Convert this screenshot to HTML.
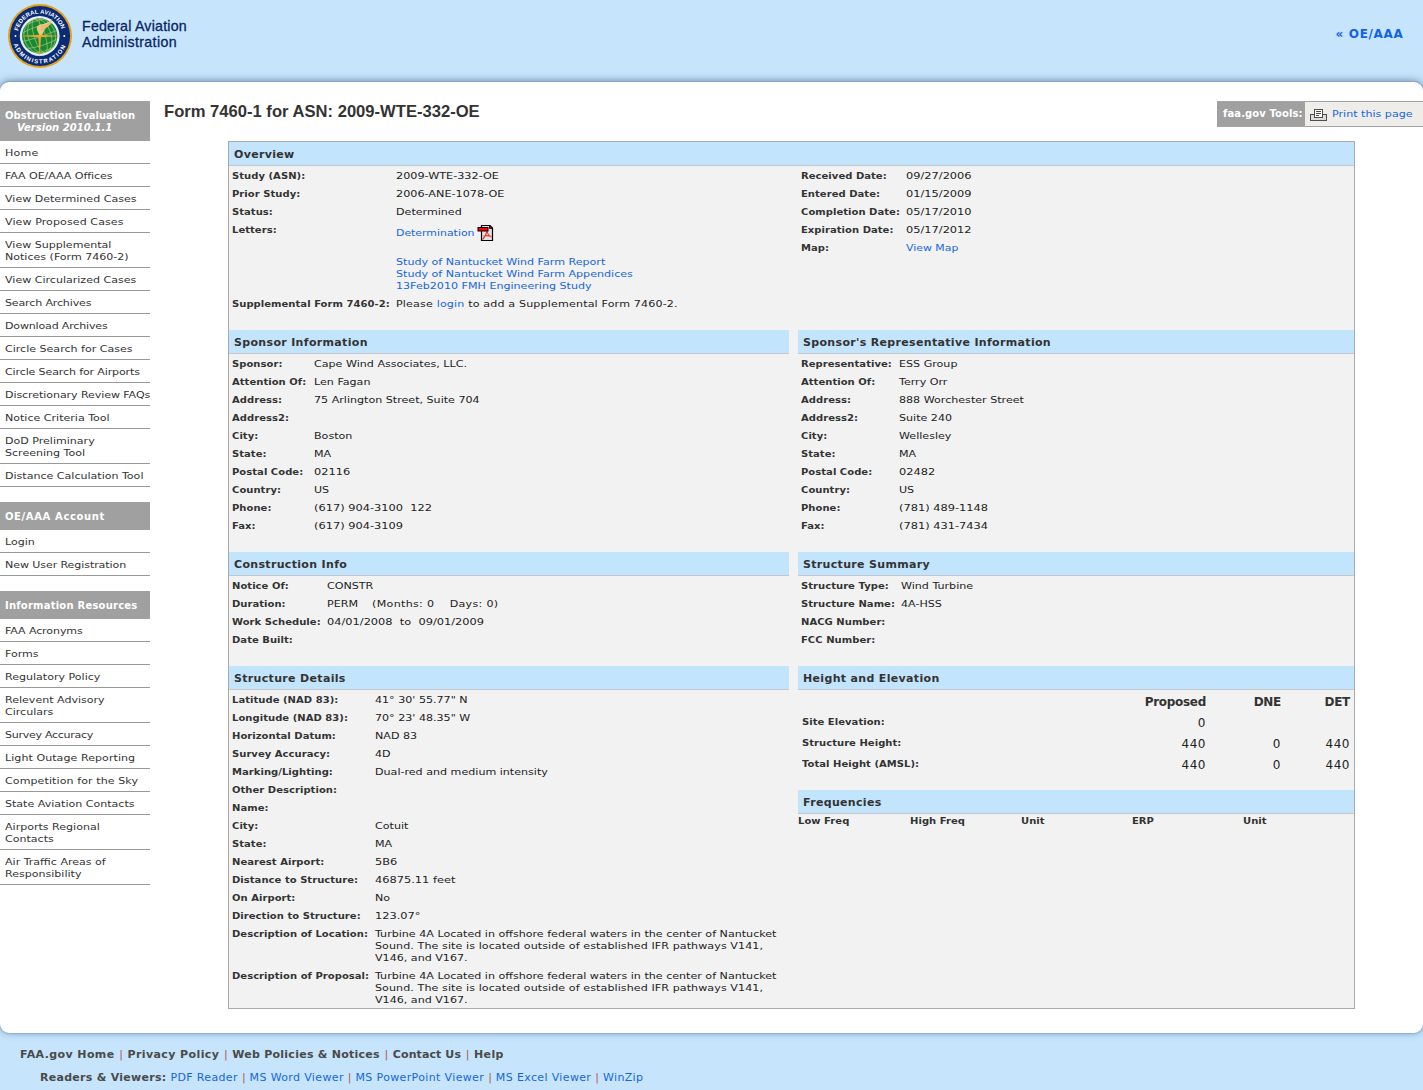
<!DOCTYPE html>
<html lang="en">
<head>
<meta charset="utf-8">
<title>Form 7460-1 for ASN: 2009-WTE-332-OE</title>
<style>
*{box-sizing:border-box;margin:0;padding:0}
html,body{width:1423px;height:1090px;overflow:hidden}
body{background:#c6e5fc;font-family:"DejaVu Sans","Liberation Sans",sans-serif;font-size:10px;line-height:12px;color:#222;letter-spacing:.55px;position:relative}
a{color:#1766e0;text-decoration:none}
b,.b{font-weight:bold;letter-spacing:.04px}
.abs{position:absolute}
/* header */
#hdr{position:absolute;left:0;top:0;width:1423px;height:82px;background:#c6e5fc}
#logo{position:absolute;left:7px;top:3px;width:66px;height:66px}
#faa1,#faa2{position:absolute;left:82px;font-family:"Liberation Sans",sans-serif;font-size:14.2px;letter-spacing:.21px;color:#0a2466;-webkit-text-stroke:.3px #0a2466;line-height:16px;white-space:nowrap}
#faa1{top:18.300px}#faa2{top:34px;letter-spacing:.36px}
#oeaaa{position:absolute;right:19.500px;top:26px;font-weight:bold;font-size:12px;line-height:16px;letter-spacing:.68px;color:#0f62ea}
#white{position:absolute;left:0;top:82px;width:1423px;height:951px;background:#fff;border-radius:9px;box-shadow:0 0 2px rgba(45,75,115,.45),0 -1px 8px rgba(45,75,115,.6)}
/* sidebar */
#side{position:absolute;left:0;top:101px;width:150px}
#side h3{background:#a0a0a0;color:#fff;font-size:10px;line-height:12px;font-weight:bold;letter-spacing:.02px;padding:9px 5px 7px;height:28px;margin-top:15px}
#side h3.first{height:40px;margin-top:0}
#side h3 i{padding-left:12px}
#side a{display:block;color:#333;padding:6px 0 4px 5px;border-bottom:1px solid #999;line-height:12px;white-space:nowrap}
.sx{display:inline-block;transform:scale(1.105,.93);transform-origin:0 80%;letter-spacing:0}
/* title + tools */
#title{position:absolute;left:164px;top:102px;font-family:"Liberation Sans",sans-serif;font-weight:bold;font-size:16.6px;line-height:20px;letter-spacing:0;color:#333;white-space:nowrap}
#tools{position:absolute;left:1217px;top:101px;width:206px;height:26px;background:#eeede9;border-top:1px solid #a4a4a4;border-bottom:1px solid #a4a4a4}
#tools .lab{position:absolute;left:0;top:0;width:88px;height:24px;background:#a0a0a0;color:#fff;font-weight:bold;letter-spacing:.1px;padding:6px 0 0 6px;white-space:nowrap}
#tools a{position:absolute;left:115px;top:6px;white-space:nowrap;letter-spacing:0;transform:scale(1.11,.93);transform-origin:0 80%}
#tools svg{position:absolute;left:93px;top:7px}
/* panel */
#panel{position:absolute;left:228px;top:141px;width:1127px;height:868px;background:#f2f2f2;border:1px solid #aaa}
.hd{position:absolute;height:24px;background:#c2e4fc;border-bottom:1px solid #c4c8cc;font-weight:bold;font-size:11px;line-height:14px;letter-spacing:.33px;color:#333;padding:6px 0 0 5px;white-space:nowrap}
.r{position:absolute;white-space:nowrap;line-height:12px}
.r b{color:#333}
.r.v{transform:scale(1.11,.93);transform-origin:0 80%;letter-spacing:0}
.r.v.n{transform:scale(1.138,.93)}
.r.l{transform:scale(1,.95);transform-origin:0 80%}
.he{position:absolute;font-size:12px;line-height:14px;letter-spacing:.5px;white-space:nowrap;color:#222}
.he.hb{font-weight:bold;letter-spacing:-.3px;color:#333}
/* footer */
#f1,#f2{position:absolute;font-size:11px;line-height:14px;white-space:nowrap;letter-spacing:.4px}
#f1{left:20px;top:1048px;color:#4a4a4a;font-weight:bold}
#f1 .sep,#f2 .sep{text-decoration:none;font-weight:normal;color:#b5544f;padding:0 4.6px;letter-spacing:0}
#f2 .sep{padding:0 4px}
#f2{left:40px;top:1071px}
#f2 b{color:#4a4a4a;letter-spacing:.28px}
#f2 a{letter-spacing:.36px}
</style>
</head>
<body>
<div id="hdr"></div>
<div id="white"></div>
<!--LOGOS--><svg id="logo" viewBox="0 0 66 66" width="66" height="66">
<defs>
<path id="arcT" d="M 10.61 32.22 A 22.4 22.4 0 0 1 55.39 32.22"/>
<path id="arcB" d="M 5.42 33.96 A 27.6 27.6 0 0 0 60.58 33.96"/>
<clipPath id="gclip"><circle cx="32.7" cy="33" r="17.6"/></clipPath>
</defs>
<circle cx="33" cy="33" r="32" fill="#e3a11a"/>
<circle cx="33" cy="33" r="30.1" fill="#0b2b76"/>
<circle cx="32.7" cy="33" r="19.9" fill="#e4f0fb"/>
<circle cx="32.7" cy="33" r="17.7" fill="#148a38"/>
<g clip-path="url(#gclip)" fill="none" stroke="#c9cf6e" stroke-width=".55" transform="rotate(-18 32.7 33)">
<ellipse cx="32.7" cy="33" rx="5.5" ry="17.7"/>
<ellipse cx="32.7" cy="33" rx="11.5" ry="17.7"/>
<ellipse cx="32.7" cy="33" rx="15.6" ry="17.7"/>
<path d="M14 25.500Q32.7 21 52 25.500M14 40.500Q32.7 45 52 40.500M17 46.500Q32.7 51 48 46.500M17 19.500Q32.7 15.500 48 19.500M15 33Q32.7 35 51 33"/>
</g>
<polygon points="32.7,11 33.200,33 32.200,33" fill="#f0b552"/>
<path d="M32.800 32.500C30.500 29 29.400 26 29.900 23.600C31.500 21.800 34 21.300 36.500 21C39.500 20 43 18.500 45.400 16.300C44.500 20 42 23.500 38.500 25.600C37 28 35.800 30.500 35 32.500Z" fill="#edc684"/>
<path d="M33.500 24C37 23.500 41 21.800 43.800 19.300M34 26.500C37 25.800 39.500 24.500 41.500 22.800" stroke="#d99a3a" stroke-width=".5" fill="none"/>
<polygon points="11.500,33 32.700,31.800 54,33 32.700,34.200" fill="#f0a52e"/>
<polygon points="31.300,33 34.100,33 32.700,55" fill="#f0a52e"/>
<circle cx="8.500" cy="33" r=".95" fill="#fff"/><circle cx="57.300" cy="33" r=".95" fill="#fff"/>
<text font-family="Liberation Sans, sans-serif" font-weight="bold" font-size="5.900" fill="#fff"><textPath href="#arcT" startOffset="49.1%" text-anchor="middle" textLength="59" lengthAdjust="spacing">FEDERAL AVIATION</textPath></text>
<text font-family="Liberation Sans, sans-serif" font-weight="bold" font-size="5.900" fill="#fff"><textPath href="#arcB" startOffset="49.1%" text-anchor="middle" textLength="68" lengthAdjust="spacing">ADMINISTRATION</textPath></text>
</svg>
<!--LOGOE-->
<div id="faa1">Federal Aviation</div>
<div id="faa2">Administration</div>
<a id="oeaaa">« OE/AAA</a>
<div id="side">
<h3 class="first">Obstruction Evaluation<br><i>Version 2010.1.1</i></h3>
<a><span class="sx" style="letter-spacing:0.23px">Home</span></a>
<a><span class="sx" style="letter-spacing:-0.06px">FAA OE/AAA Offices</span></a>
<a><span class="sx">View Determined Cases</span></a>
<a><span class="sx" style="letter-spacing:0.08px">View Proposed Cases</span></a>
<a><span class="sx">View Supplemental</span><br><span class="sx">Notices (Form 7460-2)</span></a>
<a><span class="sx">View Circularized Cases</span></a>
<a><span class="sx" style="letter-spacing:-0.14px">Search Archives</span></a>
<a><span class="sx" style="letter-spacing:-0.16px">Download Archives</span></a>
<a><span class="sx">Circle Search for Cases</span></a>
<a><span class="sx" style="letter-spacing:-0.12px">Circle Search for Airports</span></a>
<a><span class="sx" style="letter-spacing:-0.07px">Discretionary Review FAQs</span></a>
<a><span class="sx">Notice Criteria Tool</span></a>
<a><span class="sx">DoD Preliminary</span><br><span class="sx">Screening Tool</span></a>
<a><span class="sx">Distance Calculation Tool</span></a>
<h3 style="letter-spacing:.62px">OE/AAA Account</h3>
<a><span class="sx">Login</span></a>
<a><span class="sx" style="letter-spacing:-0.08px">New User Registration</span></a>
<h3 style="letter-spacing:.22px">Information Resources</h3>
<a><span class="sx" style="letter-spacing:-0.09px">FAA Acronyms</span></a>
<a><span class="sx">Forms</span></a>
<a><span class="sx">Regulatory Policy</span></a>
<a><span class="sx">Relevent Advisory</span><br><span class="sx">Circulars</span></a>
<a><span class="sx" style="letter-spacing:-0.26px">Survey Accuracy</span></a>
<a><span class="sx" style="letter-spacing:0.05px">Light Outage Reporting</span></a>
<a><span class="sx" style="letter-spacing:0.08px">Competition for the Sky</span></a>
<a><span class="sx">State Aviation Contacts</span></a>
<a><span class="sx">Airports Regional</span><br><span class="sx">Contacts</span></a>
<a><span class="sx">Air Traffic Areas of</span><br><span class="sx">Responsibility</span></a>
</div>
<div id="title">Form 7460-1 for ASN: 2009-WTE-332-OE</div>
<div id="tools"><span class="lab">faa.gov Tools:</span>
<svg width="17" height="12" viewBox="0 0 17 12"><rect x=".5" y="5.500" width="16" height="6" fill="#dcdcdc" stroke="#4d4d4d"/><rect x="4.500" y=".5" width="8" height="8" fill="#fff" stroke="#4d4d4d"/><path d="M6 2.500h5M6 4.500h5M6 6.500h3" stroke="#4d4d4d" stroke-width="1"/></svg>
<a>Print this page</a></div>

<!--MAINSTART-->
<div id="panel">
<div class="hd" style="left:0px;top:0px;width:1125px">Overview</div>
<div class="r l" style="left:3px;top:28px"><b>Study (ASN):</b></div>
<div class="r v n" style="left:167px;top:28px;transform:scale(1.122,.93)">2009-WTE-332-OE</div>
<div class="r l" style="left:3px;top:46px"><b>Prior Study:</b></div>
<div class="r v n" style="left:167px;top:46px;transform:scale(1.122,.93)">2006-ANE-1078-OE</div>
<div class="r l" style="left:3px;top:64px"><b>Status:</b></div>
<div class="r v" style="left:167px;top:64px">Determined</div>
<div class="r l" style="left:3px;top:82px"><b>Letters:</b></div>
<div class="r v" style="left:167px;top:85px;transform:scale(1.09,.93)"><a>Determination</a></div>
<svg class="pdf" style="position:absolute;left:248px;top:82px" width="17" height="17" viewBox="0 0 17 17"><path d="M4.500 1.500H13L15.500 4V16.500H4.500Z" fill="#e2e2e2" stroke="#000" stroke-width="1.200"/><path d="M12.500 1.500V4.500H15.500Z" fill="#f00" stroke="#000" stroke-width=".8"/><path d="M5.500 15.500C8 13 9.500 10 10 6.500M6.500 12C9 11.500 12 11.500 14.500 12.500M10 7C10.500 9.500 12 12 14.500 13" fill="none" stroke="#e33" stroke-width="1.100"/><rect x="1" y="3.500" width="10" height="3.500" fill="#f00" stroke="#000" stroke-width="1"/></svg>
<div class="r v" style="left:167px;top:114px"><a>Study of Nantucket Wind Farm Report</a></div>
<div class="r v" style="left:167px;top:126px"><a>Study of Nantucket Wind Farm Appendices</a></div>
<div class="r v" style="left:167px;top:138px"><a>13Feb2010 FMH Engineering Study</a></div>
<div class="r l" style="left:3px;top:156px"><b>Supplemental Form 7460-2:</b></div>
<div class="r v" style="left:167px;top:156px"><span style="letter-spacing:.14px">Please <a>login</a> to add a Supplemental Form 7460-2.</span></div>
<div class="r l" style="left:572px;top:28px"><b>Received Date:</b></div>
<div class="r v n" style="left:677px;top:28px">09/27/2006</div>
<div class="r l" style="left:572px;top:46px"><b>Entered Date:</b></div>
<div class="r v n" style="left:677px;top:46px">01/15/2009</div>
<div class="r l" style="left:572px;top:64px"><b>Completion Date:</b></div>
<div class="r v n" style="left:677px;top:64px">05/17/2010</div>
<div class="r l" style="left:572px;top:82px"><b>Expiration Date:</b></div>
<div class="r v n" style="left:677px;top:82px">05/17/2012</div>
<div class="r l" style="left:572px;top:100px"><b>Map:</b></div>
<div class="r v" style="left:677px;top:100px;transform:scale(1.09,.93)"><a>View Map</a></div>
<div class="hd" style="left:0px;top:188px;width:560px">Sponsor Information</div>
<div class="hd" style="left:569px;top:188px;width:556px">Sponsor's Representative Information</div>
<div class="r l" style="left:3px;top:216px"><b>Sponsor:</b></div>
<div class="r v" style="left:85px;top:216px">Cape Wind Associates, LLC.</div>
<div class="r l" style="left:3px;top:234px"><b>Attention Of:</b></div>
<div class="r v" style="left:85px;top:234px">Len Fagan</div>
<div class="r l" style="left:3px;top:252px"><b>Address:</b></div>
<div class="r v" style="left:85px;top:252px">75 Arlington Street, Suite 704</div>
<div class="r l" style="left:3px;top:270px"><b>Address2:</b></div>
<div class="r l" style="left:3px;top:288px"><b>City:</b></div>
<div class="r v" style="left:85px;top:288px">Boston</div>
<div class="r l" style="left:3px;top:306px"><b>State:</b></div>
<div class="r v" style="left:85px;top:306px">MA</div>
<div class="r l" style="left:3px;top:324px"><b>Postal Code:</b></div>
<div class="r v n" style="left:85px;top:324px">02116</div>
<div class="r l" style="left:3px;top:342px"><b>Country:</b></div>
<div class="r v" style="left:85px;top:342px">US</div>
<div class="r l" style="left:3px;top:360px"><b>Phone:</b></div>
<div class="r v n" style="left:85px;top:360px">(617) 904-3100&nbsp; 122</div>
<div class="r l" style="left:3px;top:378px"><b>Fax:</b></div>
<div class="r v n" style="left:85px;top:378px">(617) 904-3109</div>
<div class="r l" style="left:572px;top:216px"><b>Representative:</b></div>
<div class="r v" style="left:670px;top:216px">ESS Group</div>
<div class="r l" style="left:572px;top:234px"><b>Attention Of:</b></div>
<div class="r v" style="left:670px;top:234px">Terry Orr</div>
<div class="r l" style="left:572px;top:252px"><b>Address:</b></div>
<div class="r v" style="left:670px;top:252px">888 Worchester Street</div>
<div class="r l" style="left:572px;top:270px"><b>Address2:</b></div>
<div class="r v" style="left:670px;top:270px">Suite 240</div>
<div class="r l" style="left:572px;top:288px"><b>City:</b></div>
<div class="r v" style="left:670px;top:288px">Wellesley</div>
<div class="r l" style="left:572px;top:306px"><b>State:</b></div>
<div class="r v" style="left:670px;top:306px">MA</div>
<div class="r l" style="left:572px;top:324px"><b>Postal Code:</b></div>
<div class="r v n" style="left:670px;top:324px">02482</div>
<div class="r l" style="left:572px;top:342px"><b>Country:</b></div>
<div class="r v" style="left:670px;top:342px">US</div>
<div class="r l" style="left:572px;top:360px"><b>Phone:</b></div>
<div class="r v n" style="left:670px;top:360px">(781) 489-1148</div>
<div class="r l" style="left:572px;top:378px"><b>Fax:</b></div>
<div class="r v n" style="left:670px;top:378px">(781) 431-7434</div>
<div class="hd" style="left:0px;top:410px;width:560px">Construction Info</div>
<div class="hd" style="left:569px;top:410px;width:556px">Structure Summary</div>
<div class="r l" style="left:3px;top:438px"><b>Notice Of:</b></div>
<div class="r v" style="left:98px;top:438px">CONSTR</div>
<div class="r l" style="left:3px;top:456px"><b>Duration:</b></div>
<div class="r v" style="left:98px;top:456px">PERM&nbsp;&nbsp;&nbsp; <span style="letter-spacing:.27px">(Months: 0&nbsp;&nbsp;&nbsp; Days: 0)</span></div>
<div class="r l" style="left:3px;top:474px"><b>Work Schedule:</b></div>
<div class="r v n" style="left:98px;top:474px">04/01/2008&nbsp; to&nbsp; 09/01/2009</div>
<div class="r l" style="left:3px;top:492px"><b>Date Built:</b></div>
<div class="r l" style="left:572px;top:438px"><b>Structure Type:</b></div>
<div class="r v" style="left:672px;top:438px">Wind Turbine</div>
<div class="r l" style="left:572px;top:456px"><b>Structure Name:</b></div>
<div class="r v" style="left:672px;top:456px">4A-HSS</div>
<div class="r l" style="left:572px;top:474px"><b>NACG Number:</b></div>
<div class="r l" style="left:572px;top:492px"><b>FCC Number:</b></div>
<div class="hd" style="left:0px;top:524px;width:560px">Structure Details</div>
<div class="hd" style="left:569px;top:524px;width:556px">Height and Elevation</div>
<div class="r l" style="left:3px;top:552px"><b>Latitude (NAD 83):</b></div>
<div class="r v" style="left:146px;top:552px">41° 30' 55.77" N</div>
<div class="r l" style="left:3px;top:570px"><b>Longitude (NAD 83):</b></div>
<div class="r v" style="left:146px;top:570px">70° 23' 48.35" W</div>
<div class="r l" style="left:3px;top:588px"><b>Horizontal Datum:</b></div>
<div class="r v" style="left:146px;top:588px">NAD 83</div>
<div class="r l" style="left:3px;top:606px"><b>Survey Accuracy:</b></div>
<div class="r v" style="left:146px;top:606px">4D</div>
<div class="r l" style="left:3px;top:624px"><b>Marking/Lighting:</b></div>
<div class="r v" style="left:146px;top:624px">Dual-red and medium intensity</div>
<div class="r l" style="left:3px;top:642px"><b>Other Description:</b></div>
<div class="r l" style="left:3px;top:660px"><b>Name:</b></div>
<div class="r l" style="left:3px;top:678px"><b>City:</b></div>
<div class="r v" style="left:146px;top:678px">Cotuit</div>
<div class="r l" style="left:3px;top:696px"><b>State:</b></div>
<div class="r v" style="left:146px;top:696px">MA</div>
<div class="r l" style="left:3px;top:714px"><b>Nearest Airport:</b></div>
<div class="r v n" style="left:146px;top:714px">5B6</div>
<div class="r l" style="left:3px;top:732px"><b>Distance to Structure:</b></div>
<div class="r v n" style="left:146px;top:732px">46875.11 feet</div>
<div class="r l" style="left:3px;top:750px"><b>On Airport:</b></div>
<div class="r v" style="left:146px;top:750px">No</div>
<div class="r l" style="left:3px;top:768px"><b>Direction to Structure:</b></div>
<div class="r v n" style="left:146px;top:768px">123.07°</div>
<div class="r l" style="left:3px;top:786px"><b>Description of Location:</b></div>
<div class="r v" style="left:146px;top:786px">Turbine 4A Located in offshore federal waters in the center of Nantucket</div>
<div class="r v" style="left:146px;top:798px"><span style="letter-spacing:.07px">Sound. The site is located outside of established IFR pathways V141,</span></div>
<div class="r v" style="left:146px;top:810px">V146, and V167.</div>
<div class="r l" style="left:3px;top:828px"><b>Description of Proposal:</b></div>
<div class="r v" style="left:146px;top:828px">Turbine 4A Located in offshore federal waters in the center of Nantucket</div>
<div class="r v" style="left:146px;top:840px"><span style="letter-spacing:.07px">Sound. The site is located outside of established IFR pathways V141,</span></div>
<div class="r v" style="left:146px;top:852px">V146, and V167.</div>
<div class="he hb" style="right:148px;top:553px">Proposed</div>
<div class="he hb" style="right:73px;top:553px">DNE</div>
<div class="he hb" style="right:4px;top:553px">DET</div>
<div class="r l" style="left:573px;top:574px"><b>Site Elevation:</b></div>
<div class="he" style="right:148px;top:574px">0</div>
<div class="r l" style="left:573px;top:595px"><b>Structure Height:</b></div>
<div class="he" style="right:148px;top:595px">440</div>
<div class="he" style="right:73px;top:595px">0</div>
<div class="he" style="right:4px;top:595px">440</div>
<div class="r l" style="left:573px;top:616px"><b>Total Height (AMSL):</b></div>
<div class="he" style="right:148px;top:616px">440</div>
<div class="he" style="right:73px;top:616px">0</div>
<div class="he" style="right:4px;top:616px">440</div>
<div class="hd" style="left:569px;top:648px;width:556px">Frequencies</div>
<div class="r l" style="left:569px;top:673px"><b>Low Freq</b></div>
<div class="r l" style="left:681px;top:673px"><b>High Freq</b></div>
<div class="r l" style="left:792px;top:673px"><b>Unit</b></div>
<div class="r l" style="left:903px;top:673px"><b>ERP</b></div>
<div class="r l" style="left:1014px;top:673px"><b>Unit</b></div>
</div>
<!--MAINEND-->
<div id="f1">FAA.gov Home<span class="sep">|</span>Privacy Policy<span class="sep">|</span><span style="letter-spacing:.26px">Web Policies &amp; Notices</span><span class="sep">|</span><span style="letter-spacing:.1px">Contact Us</span><span class="sep">|</span>Help</div>
<div id="f2"><b>Readers &amp; Viewers:</b> <a>PDF Reader</a><span class="sep">|</span><a>MS Word Viewer</a><span class="sep">|</span><a>MS PowerPoint Viewer</a><span class="sep">|</span><a>MS Excel Viewer</a><span class="sep">|</span><a>WinZip</a></div>

</body>
</html>
